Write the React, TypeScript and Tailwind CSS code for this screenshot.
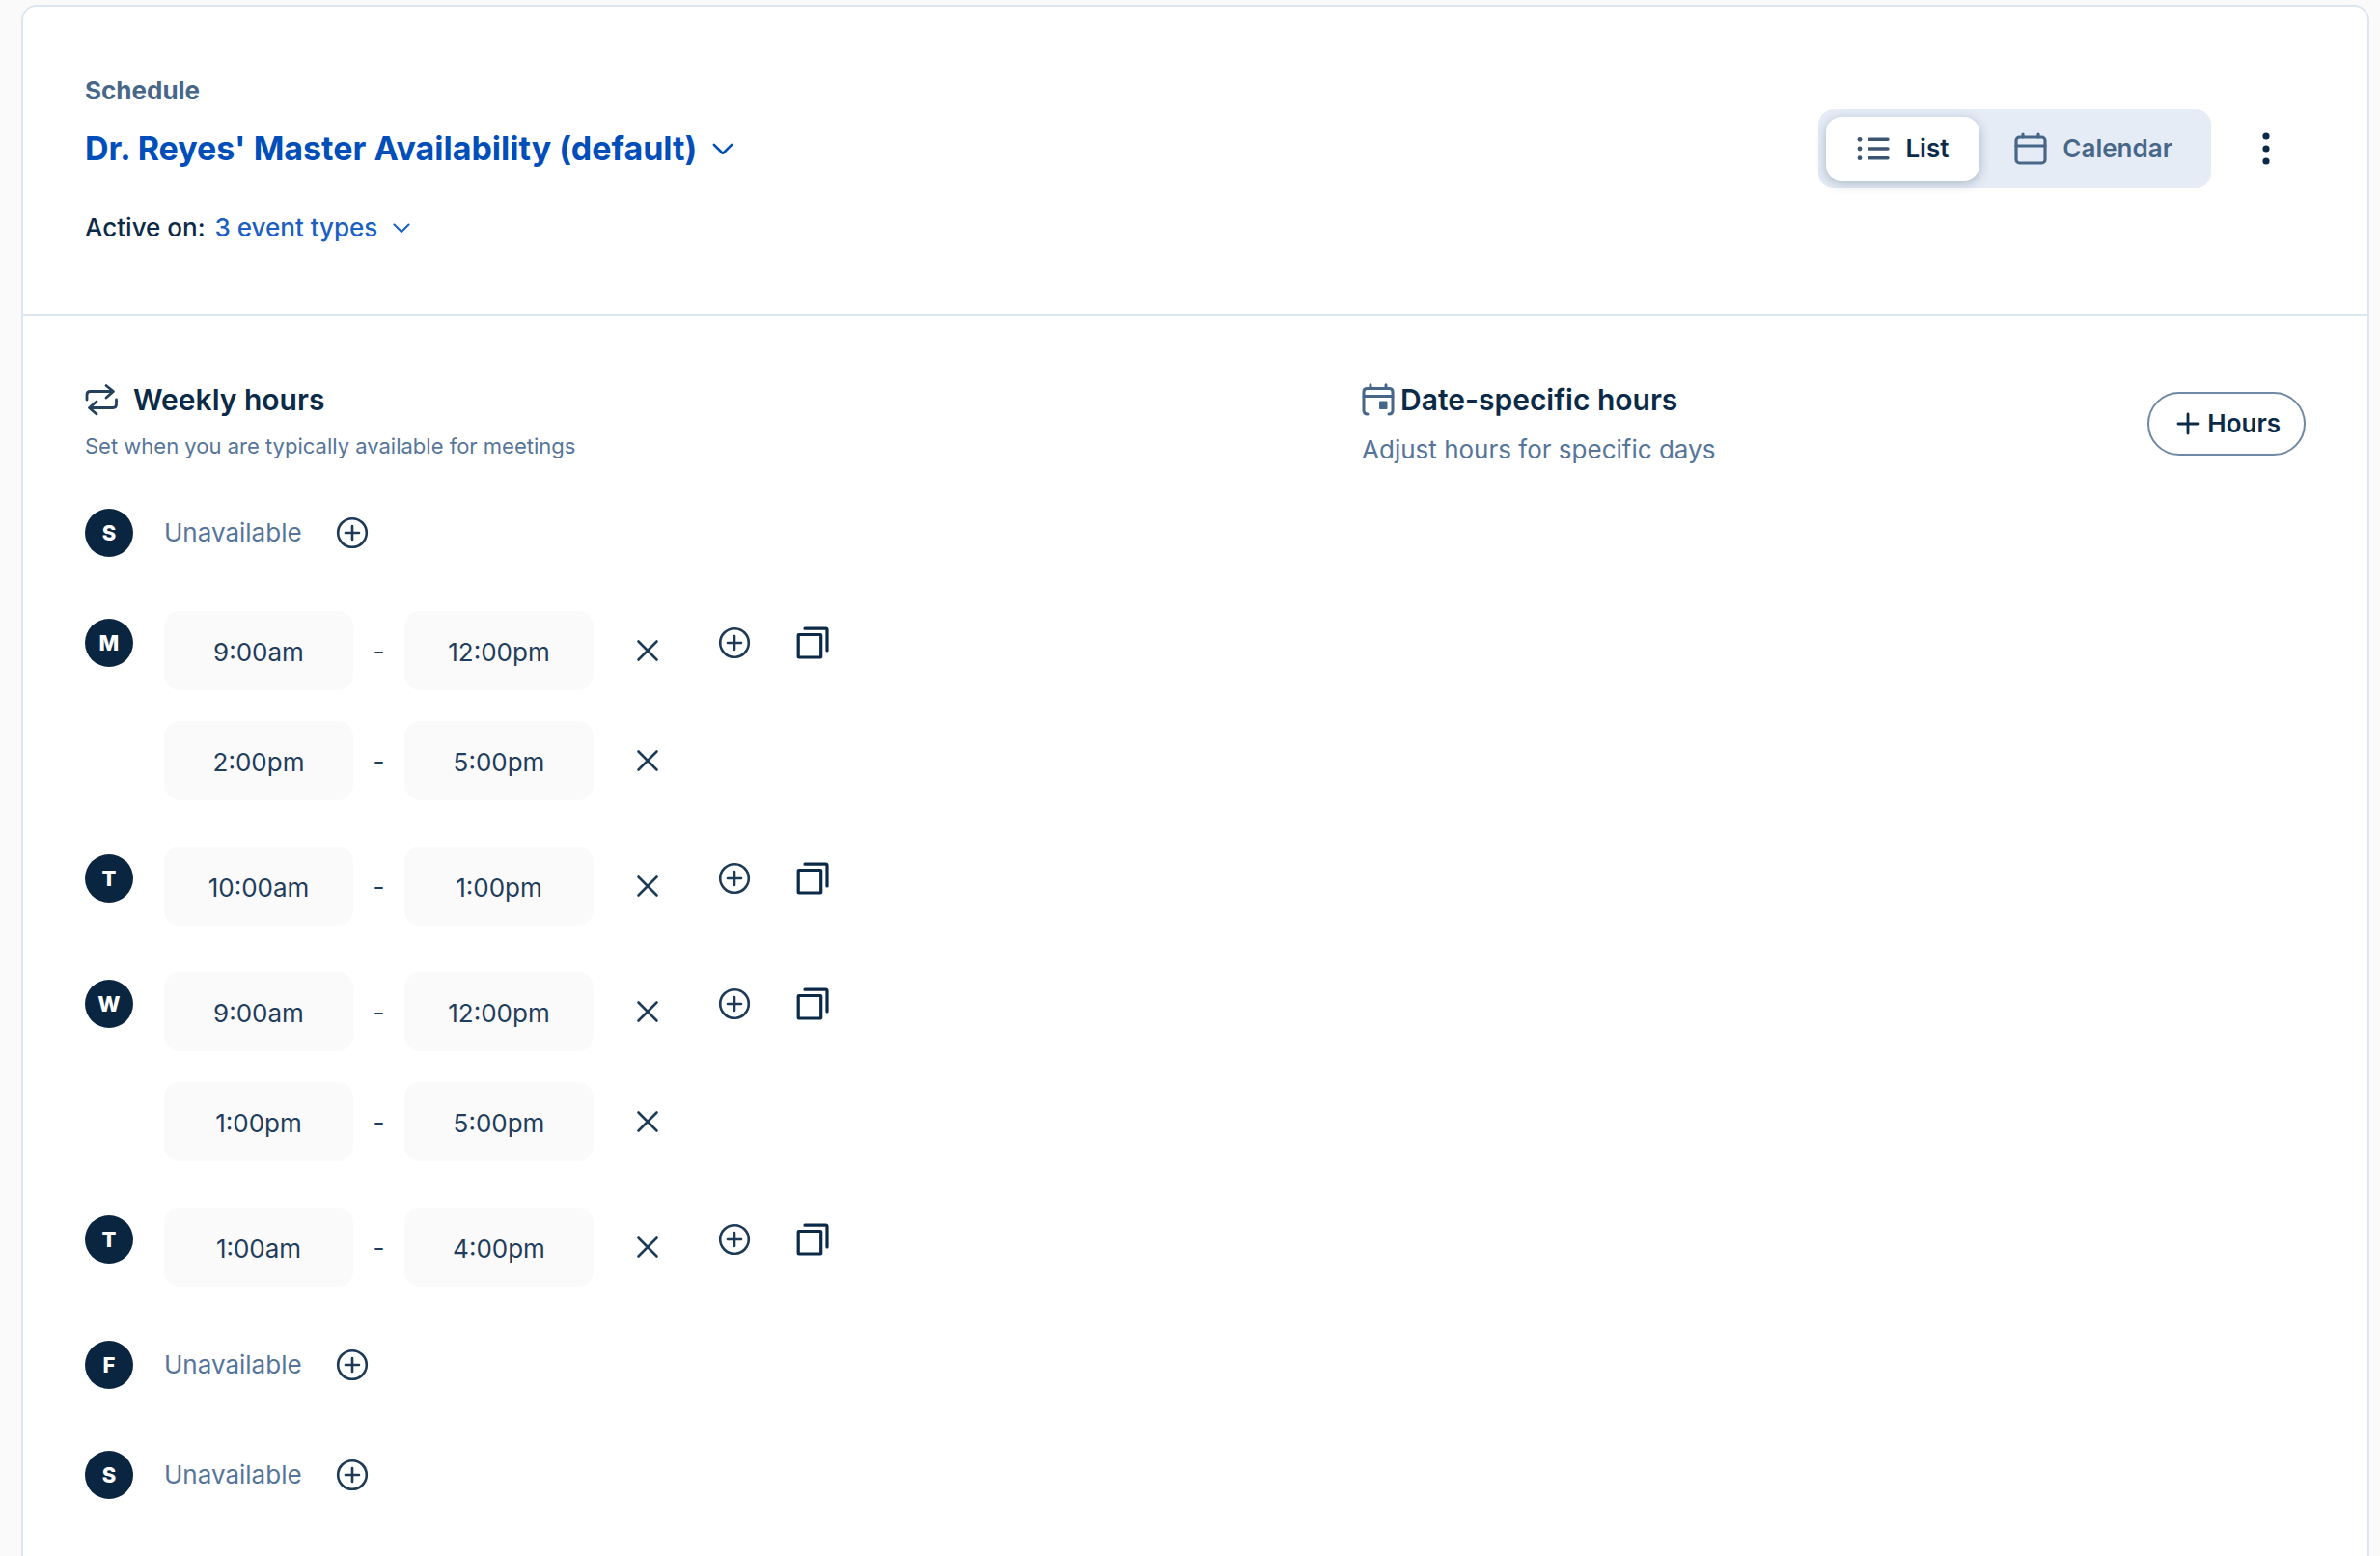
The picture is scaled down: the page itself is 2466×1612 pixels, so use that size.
import type { ReactNode } from "react";

type Interval = { from: string; to: string };
type Day = { name: string; letter: string; intervals: Interval[] };

const DAYS: Day[] = [
  { name: "Sunday", letter: "S", intervals: [] },
  {
    name: "Monday",
    letter: "M",
    intervals: [
      { from: "9:00am", to: "12:00pm" },
      { from: "2:00pm", to: "5:00pm" },
    ],
  },
  { name: "Tuesday", letter: "T", intervals: [{ from: "10:00am", to: "1:00pm" }] },
  {
    name: "Wednesday",
    letter: "W",
    intervals: [
      { from: "9:00am", to: "12:00pm" },
      { from: "1:00pm", to: "5:00pm" },
    ],
  },
  { name: "Thursday", letter: "T", intervals: [{ from: "1:00am", to: "4:00pm" }] },
  { name: "Friday", letter: "F", intervals: [] },
  { name: "Saturday", letter: "S", intervals: [] },
];

function Icon({ className, box = "0 0 34 34", width = 3, children }: { className: string; box?: string; width?: number; children: ReactNode }) {
  return (
    <svg
      viewBox={box}
      className={className}
      fill="none"
      stroke="currentColor"
      strokeWidth={width}
      strokeLinecap="round"
      strokeLinejoin="round"
      aria-hidden="true"
    >
      {children}
    </svg>
  );
}

function Chevron({ className }: { className: string }) {
  return (
    <Icon className={className} box="0 0 24 14" width={2.8}>
      <path d="M2 2l10 10L22 2" />
    </Icon>
  );
}

function ListIcon() {
  return (
    <Icon className="size-[34px] text-[#3c5672]" width={3.4}>
      <path d="M12.500 7.300h19.500M12.500 17h19.500M12.500 26.700h19.500" />
      <g fill="currentColor" stroke="none">
        <circle cx="3" cy="7.300" r="2.400" />
        <circle cx="3" cy="17" r="2.400" />
        <circle cx="3" cy="26.700" r="2.400" />
      </g>
    </Icon>
  );
}

function CalendarIcon() {
  return (
    <Icon className="size-[34px] text-[#476788]" width={3.2}>
      <rect x="2" y="5" width="30" height="27" rx="3.500" />
      <path d="M2 14h30M9 2v3M25 2v3" />
    </Icon>
  );
}

function DateIcon() {
  return (
    <Icon className="size-[34px] text-[#476788]">
      <path d="M6 32Q2 32 2 28V9Q2 5.500 5.500 5.500H28.500Q32 5.500 32 9V28Q32 32 28 32" />
      <path d="M2 13.500h30M9 1.800v3.500M25 1.800v3.500" />
      <rect x="18" y="18.500" width="8.500" height="8.500" rx="1" fill="currentColor" stroke="none" />
    </Icon>
  );
}

function RepeatIcon() {
  return (
    <Icon className="size-[34px] text-[#23405c]" width={2.8}>
      <path d="M2 17V12Q2 8.500 5.500 8.500H29M22 2.500L29.500 8.500L22 15" />
      <path d="M32.500 17V22Q32.500 25.500 29 25.500H5.500M12 19L4.500 25.500L12 32" />
    </Icon>
  );
}

function AddButton({ day, className }: { day: string; className: string }) {
  return (
    <button type="button" aria-label={`Add hours on ${day}`} className={`flex h-[66px] w-16 items-center justify-center text-[#1d3a57] ${className}`}>
      <Icon className="size-[34px]" width={2.6}>
        <circle cx="17" cy="17" r="14.800" />
        <path d="M17 10v14M10 17h14" />
      </Icon>
    </button>
  );
}

function CopyButton({ day }: { day: string }) {
  return (
    <button type="button" aria-label={`Copy ${day} hours`} className="ml-[17px] flex h-[66px] w-16 items-center justify-center text-[#0b2a47]">
      <Icon className="size-[34px]" width={3.2}>
        <rect x="2.200" y="8.500" width="23.500" height="23.500" rx="0.500" />
        <path d="M9 2.200H30.500Q32 2.200 32 3.700V25" />
      </Icon>
    </button>
  );
}

function TimeInput({ label, value }: { label: string; value: string }) {
  return (
    <input
      type="text"
      aria-label={label}
      defaultValue={value}
      className="h-[82px] w-[196px] rounded-2xl bg-[#fafafa] pt-0.5 text-center text-[26px] leading-8 text-[#1f3d5c]"
    />
  );
}

function IntervalRow({ day, interval }: { day: string; interval: Interval }) {
  return (
    <div className="flex h-[82px] items-center">
      <TimeInput label={`${day} start time`} value={interval.from} />
      <span className="w-[53px] pt-0.5 text-center text-[26px] leading-8 text-[#1f3d5c]">-</span>
      <TimeInput label={`${day} end time`} value={interval.to} />
      <button type="button" aria-label={`Remove ${interval.from} to ${interval.to}`} className="ml-6 flex size-16 items-center justify-center text-[#1d3a57]">
        <Icon className="size-6" box="0 0 24 24" width={2.6}>
          <path d="M2.500 2.500l19 19M21.500 2.500l-19 19" />
        </Icon>
      </button>
    </div>
  );
}

function DayRow({ day }: { day: Day }) {
  const open = day.intervals.length > 0;
  return (
    <li className={open ? "flex items-start pb-4" : "flex items-start pb-12"}>
      <div className="flex h-[66px] items-center">
        <span className="mr-8 flex size-[50px] items-center justify-center rounded-full bg-[#0a2540] text-[22px] leading-7 font-extrabold text-white">
          {day.letter}
        </span>
        {!open && <span className="text-[26px] leading-8 text-[#56759a]">Unavailable</span>}
      </div>
      {open ? (
        <>
          <div className="flex flex-col gap-8 pb-8">
            {day.intervals.map((interval) => (
              <IntervalRow key={interval.from} day={day.name} interval={interval} />
            ))}
          </div>
          <AddButton day={day.name} className="ml-[26px]" />
          <CopyButton day={day.name} />
        </>
      ) : (
        <AddButton day={day.name} className="ml-5" />
      )}
    </li>
  );
}

export default function App() {
  return (
    <main className="flex h-screen flex-col overflow-hidden bg-[#fafafa] pt-[5px] pr-[11px] pl-[22px] font-['Inter',sans-serif] text-[#0b2a47]">
      <section className="flex grow flex-col rounded-t-2xl border-2 border-b-0 border-[#dbe6f1] bg-white">
        <header className="flex items-start justify-between border-b-2 border-[#dbe6f1] px-16 pt-[71px] pb-[73px]">
          <div>
            <p className="text-[26px] leading-8 font-bold text-[#476788]">Schedule</p>
            <h1 className="mt-6">
              <button type="button" aria-haspopup="menu" className="flex items-center gap-4 text-[34px] leading-10 font-bold text-[#004eba]">
                Dr. Reyes' Master Availability (default)
                <Chevron className="w-[22px]" />
              </button>
            </h1>
            <div className="mt-[46px] flex items-center gap-2.5 text-[26px] leading-8 font-medium">
              <span>Active on:</span>
              <button type="button" aria-haspopup="menu" className="flex items-center gap-4 text-[#1a5fc1]">
                3 event types
                <Chevron className="w-[18px]" />
              </button>
            </div>
          </div>
          <div className="mt-[35px] flex items-center gap-4">
            <div className="flex rounded-2xl bg-[#e6ecf6] p-2 text-[26px] leading-8">
              <button type="button" aria-pressed="true" className="flex h-[66px] items-center gap-4 rounded-2xl bg-white px-8 font-semibold shadow-[0_3px_12px_rgba(11,42,71,0.28)]">
                <ListIcon />
                List
              </button>
              <button type="button" aria-pressed="false" className="flex items-center gap-4 pr-8 pl-9 font-semibold text-[#476788]">
                <CalendarIcon />
                Calendar
              </button>
            </div>
            <button type="button" aria-label="More options" className="flex h-[66px] w-[82px] items-center justify-center">
              <svg viewBox="0 0 8 34" className="h-[34px] w-2" fill="currentColor" aria-hidden="true">
                <circle cx="4" cy="4" r="3.600" />
                <circle cx="4" cy="17" r="3.600" />
                <circle cx="4" cy="30" r="3.600" />
              </svg>
            </button>
          </div>
        </header>

        <div className="grid grid-cols-[23fr_17fr] px-16 pt-[67px]">
          <section>
            <h2 className="flex items-center gap-4 text-[30px] leading-10 font-semibold">
              <RepeatIcon />
              Weekly hours
            </h2>
            <p className="mt-3 text-[22px] leading-8 text-[#56759a]">Set when you are typically available for meetings</p>
            <ul className="mt-[41px]">
              {DAYS.map((day) => (
                <DayRow key={day.name} day={day} />
              ))}
            </ul>
          </section>
          <section className="flex items-start justify-between">
            <div>
              <h2 className="flex items-center gap-[6px] text-[30px] leading-10 font-semibold">
                <DateIcon />
                Date-specific hours
              </h2>
              <p className="mt-4 text-[26px] leading-8 text-[#56759a]">Adjust hours for specific days</p>
            </div>
            <button type="button" className="mt-3 flex h-[66px] items-center gap-2 rounded-full border-2 border-[#6f88a3] pr-6 pl-7 text-[26px] leading-8 font-semibold">
              <Icon className="size-6" box="0 0 24 24" width={2.8}>
                <path d="M12 2v20M2 12h20" />
              </Icon>
              Hours
            </button>
          </section>
        </div>
      </section>
    </main>
  );
}
